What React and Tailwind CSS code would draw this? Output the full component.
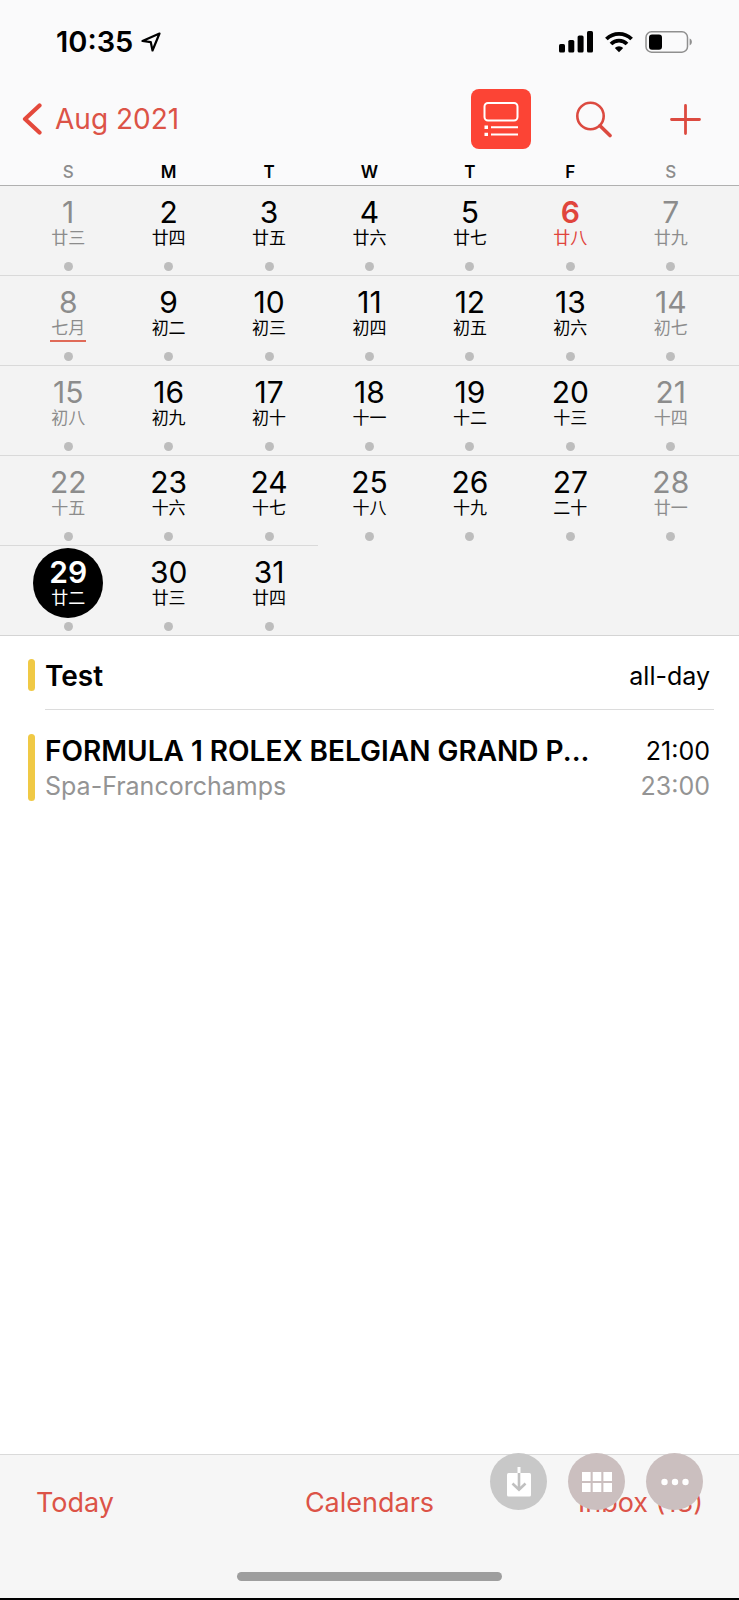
const WEEKDAYS = ['S', 'M', 'T', 'W', 'T', 'F', 'S'];

const WEEKS = [
  ['廿三', '廿四', '廿五', '廿六', '廿七', '廿八', '廿九'],
  ['七月', '初二', '初三', '初四', '初五', '初六', '初七'],
  ['初八', '初九', '初十', '十一', '十二', '十三', '十四'],
  ['十五', '十六', '十七', '十八', '十九', '二十', '廿一'],
  ['廿二', '廿三', '廿四'],
];

const TODAY = 6;
const SELECTED = 29;
const LUNAR_MONTH_START = 8;

function StatusBar() {
  return (
    <div className="flex h-[82px] items-center justify-between pl-14 pr-[46px] pt-[2px]">
      <div className="flex items-center gap-2 text-[29px] font-semibold">
        <span>10:35</span>
        <svg className="size-5" viewBox="0 0 20 20" fill="none" stroke="#000" strokeWidth="2.2" strokeLinejoin="round">
          <path d="M18.5 1.5 L1.5 9 L9.8 10.2 L11.5 18.5 Z" />
        </svg>
      </div>
      <div className="flex items-center gap-3">
        <svg className="h-[22px] w-[34px]" viewBox="0 0 34 22">
          <rect x="0" y="13" width="6" height="8.5" rx="1.6" />
          <rect x="9.3" y="9" width="6" height="12.5" rx="1.6" />
          <rect x="18.6" y="4.5" width="6" height="17" rx="1.6" />
          <rect x="28" y="0" width="6" height="21.5" rx="1.6" />
        </svg>
        <svg className="h-[22px] w-[28px]" viewBox="0 0 28 22" fill="none" stroke="#000" strokeWidth="3.8">
          <path d="M1.4 8 A18 18 0 0 1 26.6 8" />
          <path d="M6 13 A11.3 11.3 0 0 1 22 13" />
          <path d="M14 21.3 L9.8 17 A6 6 0 0 1 18.2 17 Z" fill="#000" stroke="none" />
        </svg>
        <svg className="h-[22px] w-[48px]" viewBox="0 0 48 22">
          <rect x="1" y="0.8" width="41.5" height="20.4" rx="5.5" fill="none" stroke="#8f8f8f" strokeWidth="1.5" />
          <rect x="4" y="3.4" width="13" height="15.4" rx="3" />
          <path d="M44.6 7.6 C47.6 8.6 47.6 13.4 44.6 14.4 Z" fill="#8f8f8f" />
        </svg>
      </div>
    </div>
  );
}

function NavBar() {
  return (
    <div className="flex h-[74px] items-center justify-between pl-[22px] pr-[38px] text-[#dc5347]">
      <button type="button" className="flex items-center gap-[13px] text-[28px]">
        <svg className="h-8 w-5" viewBox="0 0 20 32" fill="none" stroke="#e4493c" strokeWidth="4.2" strokeLinecap="round" strokeLinejoin="round">
          <path d="M17.5 2.5 L3 16 L17.5 29.5" />
        </svg>
        Aug 2021
      </button>
      <div className="flex items-center">
        <button type="button" aria-label="List view" className="flex size-[60px] items-center justify-center rounded-lg bg-[#fc4435]">
          <svg className="size-[36px]" viewBox="0 0 36 36" fill="none" stroke="#fff" strokeWidth="2">
            <rect x="1.5" y="2" width="33" height="17.5" rx="3.5" />
            <path d="M8 26.3 H35 M8 33.4 H35" />
            <path d="M1.5 26.3 H5 M1.5 33.4 H5" strokeWidth="3.4" />
          </svg>
        </button>
        <button type="button" aria-label="Search" className="ml-11">
          <svg className="size-[37px]" viewBox="0 0 37 37" fill="none" stroke="#dc4a40" strokeLinecap="round">
            <circle cx="15.5" cy="15" r="13.2" strokeWidth="2.6" />
            <path d="M25 24.8 L35 34.5" strokeWidth="3.6" />
          </svg>
        </button>
        <button type="button" aria-label="Add event" className="ml-[58px]">
          <svg className="size-[31px]" viewBox="0 0 31 31" fill="none" stroke="#dc4a40" strokeWidth="2.8" strokeLinecap="round">
            <path d="M15.5 1.5 V29.5 M1.5 15.5 H29.5" />
          </svg>
        </button>
      </div>
    </div>
  );
}

function Day({ day, lunar, weekend }) {
  let color = 'text-black';
  if (weekend) color = 'text-[#8c8c8c]';
  if (day === TODAY) color = 'text-[#e0453c]';
  if (day === SELECTED) color = 'rounded-full bg-black text-white';
  const bold = day === TODAY || day === SELECTED;

  return (
    <div className="flex flex-col items-center pt-[2px]">
      <button type="button" className={`flex size-[70px] flex-col items-center pt-2 ${color}`}>
        <span className={`text-[30px] leading-8 ${bold ? 'font-semibold' : ''}`}>{day}</span>
        <span
          className={`text-[17px] leading-5 ${day === LUNAR_MONTH_START ? 'border-b-2 border-[#e06a58] px-px pb-[2px]' : ''}`}
        >
          {lunar}
        </span>
      </button>
      <span className="mt-1 size-[9px] rounded-full bg-[#bdbdbd]" />
    </div>
  );
}

function MonthGrid() {
  return (
    <section className="border-b border-[#d4d4d4] bg-[#f3f3f3]">
      {WEEKS.map((week, w) => (
        <div key={w}>
          {w > 0 && <div className={`h-px bg-[#d9d9d9] ${week.length < 7 ? 'w-[43%]' : ''}`} />}
          <div className="grid h-[89px] grid-cols-7 px-[18px]">
            {week.map((lunar, d) => (
              <Day key={lunar} day={w * 7 + d + 1} lunar={lunar} weekend={d === 0 || d === 6} />
            ))}
          </div>
        </div>
      ))}
    </section>
  );
}

function EventList() {
  return (
    <main className="flex-1 bg-white pl-7 pr-[25px]">
      <div className="flex gap-[10px]">
        <span className="mt-[23px] h-8 w-[7px] rounded-full bg-[#f0c945]" />
        <div className="flex h-[74px] flex-1 items-start justify-between border-b border-[#dcdcdc] pr-1 pt-[22px] leading-9">
          <h2 className="text-[28px] font-semibold">Test</h2>
          <span className="text-[25px]">all-day</span>
        </div>
      </div>
      <div className="flex gap-[10px] pt-6">
        <span className="h-[67px] w-[7px] rounded-full bg-[#f0c945]" />
        <div className="flex min-w-0 flex-1 justify-between pr-1 text-[25px] leading-[35px]">
          <div className="min-w-0">
            <h2 className="truncate text-[28px] font-semibold leading-[35px]">FORMULA 1 ROLEX BELGIAN GRAND P...</h2>
            <p className="text-[#949494]">Spa-Francorchamps</p>
          </div>
          <div className="shrink-0 text-right">
            <p>21:00</p>
            <p className="text-[#949494]">23:00</p>
          </div>
        </div>
      </div>
    </main>
  );
}

function FloatingActions() {
  return (
    <div className="absolute -top-[2px] right-9 flex gap-[21px]">
      <button type="button" aria-label="Save" className="flex size-[57px] items-center justify-center rounded-full bg-[#c8c8c8]">
        <svg className="h-[30px] w-6" viewBox="0 0 24 30" fill="none">
          <rect x="0" y="6" width="24" height="23.5" rx="1.5" fill="#fff" />
          <path d="M12 0 V6" stroke="#fff" strokeWidth="3" />
          <path d="M12 6 V22.5 M5.5 16.5 L12 22.8 L18.5 16.5" stroke="#c0c0c0" strokeWidth="2.6" />
        </svg>
      </button>
      <button type="button" aria-label="Grid" className="flex size-[57px] items-center justify-center rounded-full bg-[#cbbfbf]">
        <svg className="h-5 w-[30px]" viewBox="0 0 30 20" fill="#fff">
          <path d="M0 0h8.6v9H0z M10.7 0h8.6v9h-8.6z M21.4 0H30v9h-8.6z M0 11h8.6v9H0z M10.7 11h8.6v9h-8.6z M21.4 11H30v9h-8.6z" />
        </svg>
      </button>
      <button type="button" aria-label="More" className="flex size-[57px] items-center justify-center rounded-full bg-[#cbbfbf]">
        <svg className="h-2 w-7" viewBox="0 0 28 8" fill="#fff">
          <circle cx="3.5" cy="4" r="3.2" />
          <circle cx="14" cy="4" r="3.2" />
          <circle cx="24.5" cy="4" r="3.2" />
        </svg>
      </button>
    </div>
  );
}

function TabBar() {
  return (
    <footer className="relative border-t border-[#dadada] bg-[#f6f6f6]">
      <nav className="grid h-24 grid-cols-3 items-center px-9 text-[27px] text-[#dc5347]">
        <button type="button" className="justify-self-start">Today</button>
        <button type="button" className="justify-self-center">Calendars</button>
        <button type="button" className="justify-self-end">Inbox (13)</button>
      </nav>
      <div className="flex h-[47px] items-center justify-center pt-1">
        <div className="h-[9px] w-[265px] rounded-full bg-[#9e9e9e]" />
      </div>
      <FloatingActions />
    </footer>
  );
}

export default function App() {
  return (
    <div className="flex min-h-screen flex-col border-b-2 border-black bg-white font-[Inter,'Noto_Sans_CJK_SC',sans-serif] text-black">
      <header className="border-b border-[#b0b0b0] bg-[#fafafb]">
        <StatusBar />
        <NavBar />
        <div className="grid h-[29px] grid-cols-7 items-end px-[18px] text-center text-[17px] font-semibold leading-[26px]">
          {WEEKDAYS.map((name, i) => (
            <span key={i} className={i === 0 || i === 6 ? 'font-medium text-[#8c8c8c]' : ''}>
              {name}
            </span>
          ))}
        </div>
      </header>
      <MonthGrid />
      <EventList />
      <TabBar />
    </div>
  );
}
